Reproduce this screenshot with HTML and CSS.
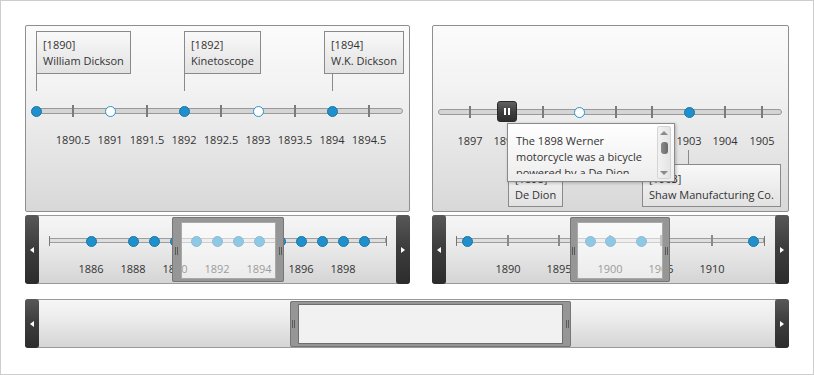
FILE: index.html
```html
<!DOCTYPE html>
<html>
<head>
<meta charset="utf-8">
<link rel="stylesheet" href="styles.css">
</head>
<body>
<div class="frame">
  <div class="row">
    <div class="col col-l">
      <div class="timeline tl-l">
        <div class="track"></div>
        <div class="tick" style="left:47px"></div>
        <div class="tick" style="left:121px"></div>
        <div class="tick" style="left:195px"></div>
        <div class="tick" style="left:269px"></div>
        <div class="tick" style="left:343px"></div>
        <div class="conn conn-up" style="left:10px"></div>
        <div class="conn conn-up" style="left:158px"></div>
        <div class="conn conn-up" style="left:306px"></div>
        <div class="dot" style="left:10px"></div>
        <div class="dot hollow" style="left:84px"></div>
        <div class="dot" style="left:158px"></div>
        <div class="dot hollow" style="left:232px"></div>
        <div class="dot" style="left:306px"></div>
        <div class="lbl" style="left:47px">1890.5</div>
        <div class="lbl" style="left:84px">1891</div>
        <div class="lbl" style="left:121px">1891.5</div>
        <div class="lbl" style="left:158px">1892</div>
        <div class="lbl" style="left:195px">1892.5</div>
        <div class="lbl" style="left:232px">1893</div>
        <div class="lbl" style="left:269px">1893.5</div>
        <div class="lbl" style="left:306px">1894</div>
        <div class="lbl" style="left:343px">1894.5</div>
        <div class="evt evt-up" style="left:10px">[1890]<br>William Dickson</div>
        <div class="evt evt-up" style="left:158px">[1892]<br>Kinetoscope</div>
        <div class="evt evt-up" style="left:298px">[1894]<br>W.K. Dickson</div>
      </div>
      <div class="nav">
        <div class="navbtn prev"><span class="arrow-l"></span></div>
        <div class="navbody">
          <div class="ntrack" style="width:337px"></div>
          <div class="cap" style="left:10px"></div>
          <div class="cap" style="left:347px"></div>
          <div class="ndot" style="left:52px"></div>
          <div class="ndot" style="left:94px"></div>
          <div class="ndot" style="left:115px"></div>
          <div class="ndot" style="left:136px"></div>
          <div class="ndot" style="left:157px"></div>
          <div class="ndot" style="left:178px"></div>
          <div class="ndot" style="left:199px"></div>
          <div class="ndot" style="left:220px"></div>
          <div class="ndot" style="left:241px"></div>
          <div class="ndot" style="left:262px"></div>
          <div class="ndot" style="left:283px"></div>
          <div class="ndot" style="left:304px"></div>
          <div class="ndot" style="left:325px"></div>
          <div class="nlbl" style="left:52px">1886</div>
          <div class="nlbl" style="left:94px">1888</div>
          <div class="nlbl" style="left:136px">1890</div>
          <div class="nlbl" style="left:178px">1892</div>
          <div class="nlbl" style="left:220px">1894</div>
          <div class="nlbl" style="left:262px">1896</div>
          <div class="nlbl" style="left:304px">1898</div>
          <div class="win win-1" style="left:133px;width:112px">
            <div class="win-in"></div>
            <div class="grip grip-l"></div>
            <div class="grip grip-r"></div>
          </div>
        </div>
        <div class="navbtn next"><span class="arrow-r"></span></div>
      </div>
    </div>
    <div class="col col-r">
      <div class="timeline tl-r">
        <div class="track"></div>
        <div class="tick" style="left:37px"></div>
        <div class="tick" style="left:73px"></div>
        <div class="tick" style="left:110px"></div>
        <div class="tick" style="left:183px"></div>
        <div class="tick" style="left:219px"></div>
        <div class="tick" style="left:292px"></div>
        <div class="tick" style="left:329px"></div>
        <div class="dot" style="left:73px"></div>
        <div class="dot hollow" style="left:146px"></div>
        <div class="dot" style="left:256px"></div>
        <div class="lbl" style="left:37px">1897</div>
        <div class="lbl" style="left:73px">1898</div>
        <div class="lbl" style="left:110px">1899</div>
        <div class="lbl" style="left:146px">1900</div>
        <div class="lbl" style="left:183px">1901</div>
        <div class="lbl" style="left:219px">1902</div>
        <div class="lbl" style="left:256px">1903</div>
        <div class="lbl" style="left:292px">1904</div>
        <div class="lbl" style="left:329px">1905</div>
        <div class="conn conn-down" style="left:74px"></div>
        <div class="conn conn-down" style="left:255px"></div>
        <div class="evt evt-down" style="left:75px">[1898]<br>De Dion</div>
        <div class="evt evt-down" style="left:209px">[1903]<br>Shaw Manufacturing Co.</div>
        <div class="thumb"><span></span><span></span></div>
        <div class="tip">
          <div class="tip-text">The 1898 Werner<br>motorcycle was a bicycle<br>powered by a De Dion-<br>Bouton engine</div>
          <div class="tip-sb">
            <span class="sb-up"></span>
            <span class="sb-thumb"></span>
            <span class="sb-down"></span>
          </div>
        </div>
      </div>
      <div class="nav">
        <div class="navbtn prev"><span class="arrow-l"></span></div>
        <div class="navbody">
          <div class="ntrack" style="width:308px"></div>
          <div class="cap" style="left:10px"></div>
          <div class="cap" style="left:318px"></div>
          <div class="ntick" style="left:62px"></div>
          <div class="ntick" style="left:113px"></div>
          <div class="ntick" style="left:164px"></div>
          <div class="ntick" style="left:215px"></div>
          <div class="ntick" style="left:266px"></div>
          <div class="ndot" style="left:21px"></div>
          <div class="ndot" style="left:144px"></div>
          <div class="ndot" style="left:164px"></div>
          <div class="ndot" style="left:195px"></div>
          <div class="ndot" style="left:307px"></div>
          <div class="nlbl" style="left:62px">1890</div>
          <div class="nlbl" style="left:113px">1895</div>
          <div class="nlbl" style="left:164px">1900</div>
          <div class="nlbl" style="left:215px">1905</div>
          <div class="nlbl" style="left:266px">1910</div>
          <div class="win win-2" style="left:124px;width:100px">
            <div class="win-in"></div>
            <div class="grip grip-l"></div>
            <div class="grip grip-r"></div>
          </div>
        </div>
        <div class="navbtn next"><span class="arrow-r"></span></div>
      </div>
    </div>
  </div>
  <div class="nav scroll">
    <div class="navbtn prev"><span class="arrow-l"></span></div>
    <div class="navbody">
      <div class="win win-s" style="left:251px;width:281px">
        <div class="win-in"></div>
        <div class="grip grip-l"></div>
        <div class="grip grip-r"></div>
      </div>
    </div>
    <div class="navbtn next"><span class="arrow-r"></span></div>
  </div>
</div>
</body>
</html>
```
FILE: styles.css
```css
* { box-sizing: border-box; }
body {
  margin: 0;
  background: #fff;
  font-family: "Open Sans", "Noto Sans", sans-serif;
  font-size: 11px;
  color: #333;
}
.frame {
  width: 814px;
  height: 375px;
  border: 1px solid #cdcdcd;
  padding: 24px 24px 0 24px;
}
.row { display: flex; gap: 22px; }
.col { display: flex; flex-direction: column; gap: 3px; }
.col-l { width: 385px; }
.col-r { width: 357px; }

.timeline {
  position: relative;
  height: 187px;
  border: 1px solid #8f8f8f;
  border-radius: 2px;
  background: linear-gradient(#fbfbfb, #f2f2f2 35%, #d8d8d8);
}
.track {
  position: absolute;
  height: 6px;
  border: 1px solid #999;
  border-radius: 3px;
  background: #d5d5d5;
}
.tl-l .track { left: 10px; top: 82px; width: 367px; }
.tl-r .track { left: 5px; top: 83px; width: 344px; }
.tick {
  position: absolute;
  width: 2px;
  height: 12px;
  margin-left: -1px;
  background: #7b7b7b;
}
.tl-l .tick { top: 79px; }
.tl-r .tick { top: 80px; }
.dot {
  position: absolute;
  width: 11px;
  height: 11px;
  margin: -5px 0 0 -5px;
  border-radius: 50%;
  background: #1f90cb;
  border: 1px solid #1877a8;
}
.dot.hollow { background: #fff; border: 1.5px solid #2b95cb; }
.tl-l .dot { top: 85px; }
.tl-r .dot { top: 86px; }
.lbl {
  position: absolute;
  transform: translateX(-50%);
  line-height: 14px;
  white-space: nowrap;
}
.tl-l .lbl { top: 107px; }
.tl-r .lbl { top: 108px; }

.evt {
  position: absolute;
  border: 1px solid #8a8a8a;
  background: linear-gradient(#f9f9f9, #e2e2e2);
  padding: 5px 6px 4px;
  line-height: 16px;
  white-space: nowrap;
}
.evt-up { top: 5px; }
.evt-down { top: 138px; padding: 6px 6px 3px; }
.conn { position: absolute; width: 1px; background: #8a8a8a; }
.conn-up { top: 48px; height: 17px; }
.conn-down { top: 124px; height: 14px; }

.thumb {
  position: absolute;
  left: 64px;
  top: 75px;
  width: 20px;
  height: 21px;
  border: 1px solid #2a2a2a;
  border-radius: 3px;
  background: linear-gradient(#606060, #3c3c3c 55%, #2e2e2e);
  display: flex;
  align-items: center;
  justify-content: center;
  gap: 2px;
}
.thumb span { width: 2px; height: 7px; background: #fff; }

.tip {
  position: absolute;
  left: 74px;
  top: 97px;
  width: 168px;
  height: 59px;
  border: 1px solid #8a8a8a;
  background: linear-gradient(#ffffff, #ededed);
  box-shadow: 1px 1px 3px rgba(0, 0, 0, 0.25);
}
.tip-text {
  height: 50px;
  width: 140px;
  padding: 9px 0 0 8px;
  line-height: 16px;
  overflow: hidden;
  white-space: nowrap;
}
.tip-sb {
  position: absolute;
  left: 149px;
  top: 2px;
  bottom: 2px;
  width: 14px;
  border: 1px solid #d4d4d4;
  border-radius: 2px;
  background: linear-gradient(90deg, #f2f2f2, #e4e4e4);
}
.sb-up, .sb-down, .sb-thumb { position: absolute; left: 50%; }
.sb-up {
  top: 4px;
  margin-left: -4px;
  border-left: 4px solid transparent;
  border-right: 4px solid transparent;
  border-bottom: 4px solid #8a8a8a;
}
.sb-down {
  top: 44px;
  margin-left: -4px;
  border-left: 4px solid transparent;
  border-right: 4px solid transparent;
  border-top: 4px solid #8a8a8a;
}
.sb-thumb {
  top: 15px;
  width: 7px;
  height: 12px;
  margin-left: -3.5px;
  border-radius: 3px;
  background: linear-gradient(90deg, #8a8a8a, #6a6a6a);
}

.nav {
  display: flex;
  height: 69px;
  border: 1px solid #9a9a9a;
  border-radius: 3px;
  background: linear-gradient(#f6f6f6, #ececec 40%, #d5d5d5);
}
.navbtn {
  flex: none;
  width: 14px;
  margin: -1px;
  border-radius: 3px;
  background: linear-gradient(#585858, #3e3e3e 45%, #2c2c2c);
  display: flex;
  align-items: center;
  justify-content: center;
}
.navbtn.prev { margin-right: 0; }
.navbtn.next { margin-left: 0; }
.arrow-l {
  width: 0; height: 0;
  border-top: 3px solid transparent;
  border-bottom: 3px solid transparent;
  border-right: 4px solid #fff;
}
.arrow-r {
  width: 0; height: 0;
  border-top: 3px solid transparent;
  border-bottom: 3px solid transparent;
  border-left: 4px solid #fff;
}
.navbody { flex: 1; position: relative; }
.ntrack {
  position: absolute;
  left: 10px;
  top: 22px;
  height: 5px;
  border: 1px solid #9d9d9d;
  background: #dedede;
}
.cap { position: absolute; top: 20px; width: 1px; height: 10px; background: #777; }
.ntick { position: absolute; top: 19px; width: 2px; height: 11px; margin-left: -1px; background: #8a8a8a; }
.ndot {
  position: absolute;
  top: 25px;
  width: 11px;
  height: 11px;
  margin: -5px 0 0 -5px;
  border-radius: 50%;
  background: #1f90cb;
  border: 1px solid #1877a8;
}
.nlbl {
  position: absolute;
  top: 46px;
  transform: translateX(-50%);
  line-height: 14px;
  white-space: nowrap;
}
.win {
  position: absolute;
  top: 1px;
  height: 65px;
  border-style: solid;
  border-color: #969696;
  border-width: 5px 8px 3px 9px;
  border-radius: 2px;
  outline: 1px solid #767676;
  outline-offset: -1px;
}
.win-2 { border-width: 5px 7px 3px 7px; }
.win-in {
  position: absolute;
  inset: 0;
  border: 1px solid #a9a9a9;
  background: rgba(255, 255, 255, 0.5);
}
.grip {
  position: absolute;
  top: 50%;
  margin-top: -4px;
  width: 3px;
  height: 8px;
  border-left: 1px solid #5a5a5a;
  border-right: 1px solid #5a5a5a;
}
.grip-l { left: -6px; }
.grip-r { right: -6px; }
.win-2 .grip-l { left: -5px; }
.win-2 .grip-r { right: -5px; }

.scroll { margin-top: 15px; height: 49px; }
.win-s {
  height: 46px;
  border-width: 3px 8px 3px 8px;
}
.win-s .win-in {
  border: 1px solid #6e6e6e;
  background: #f1f1f1;
}
```
